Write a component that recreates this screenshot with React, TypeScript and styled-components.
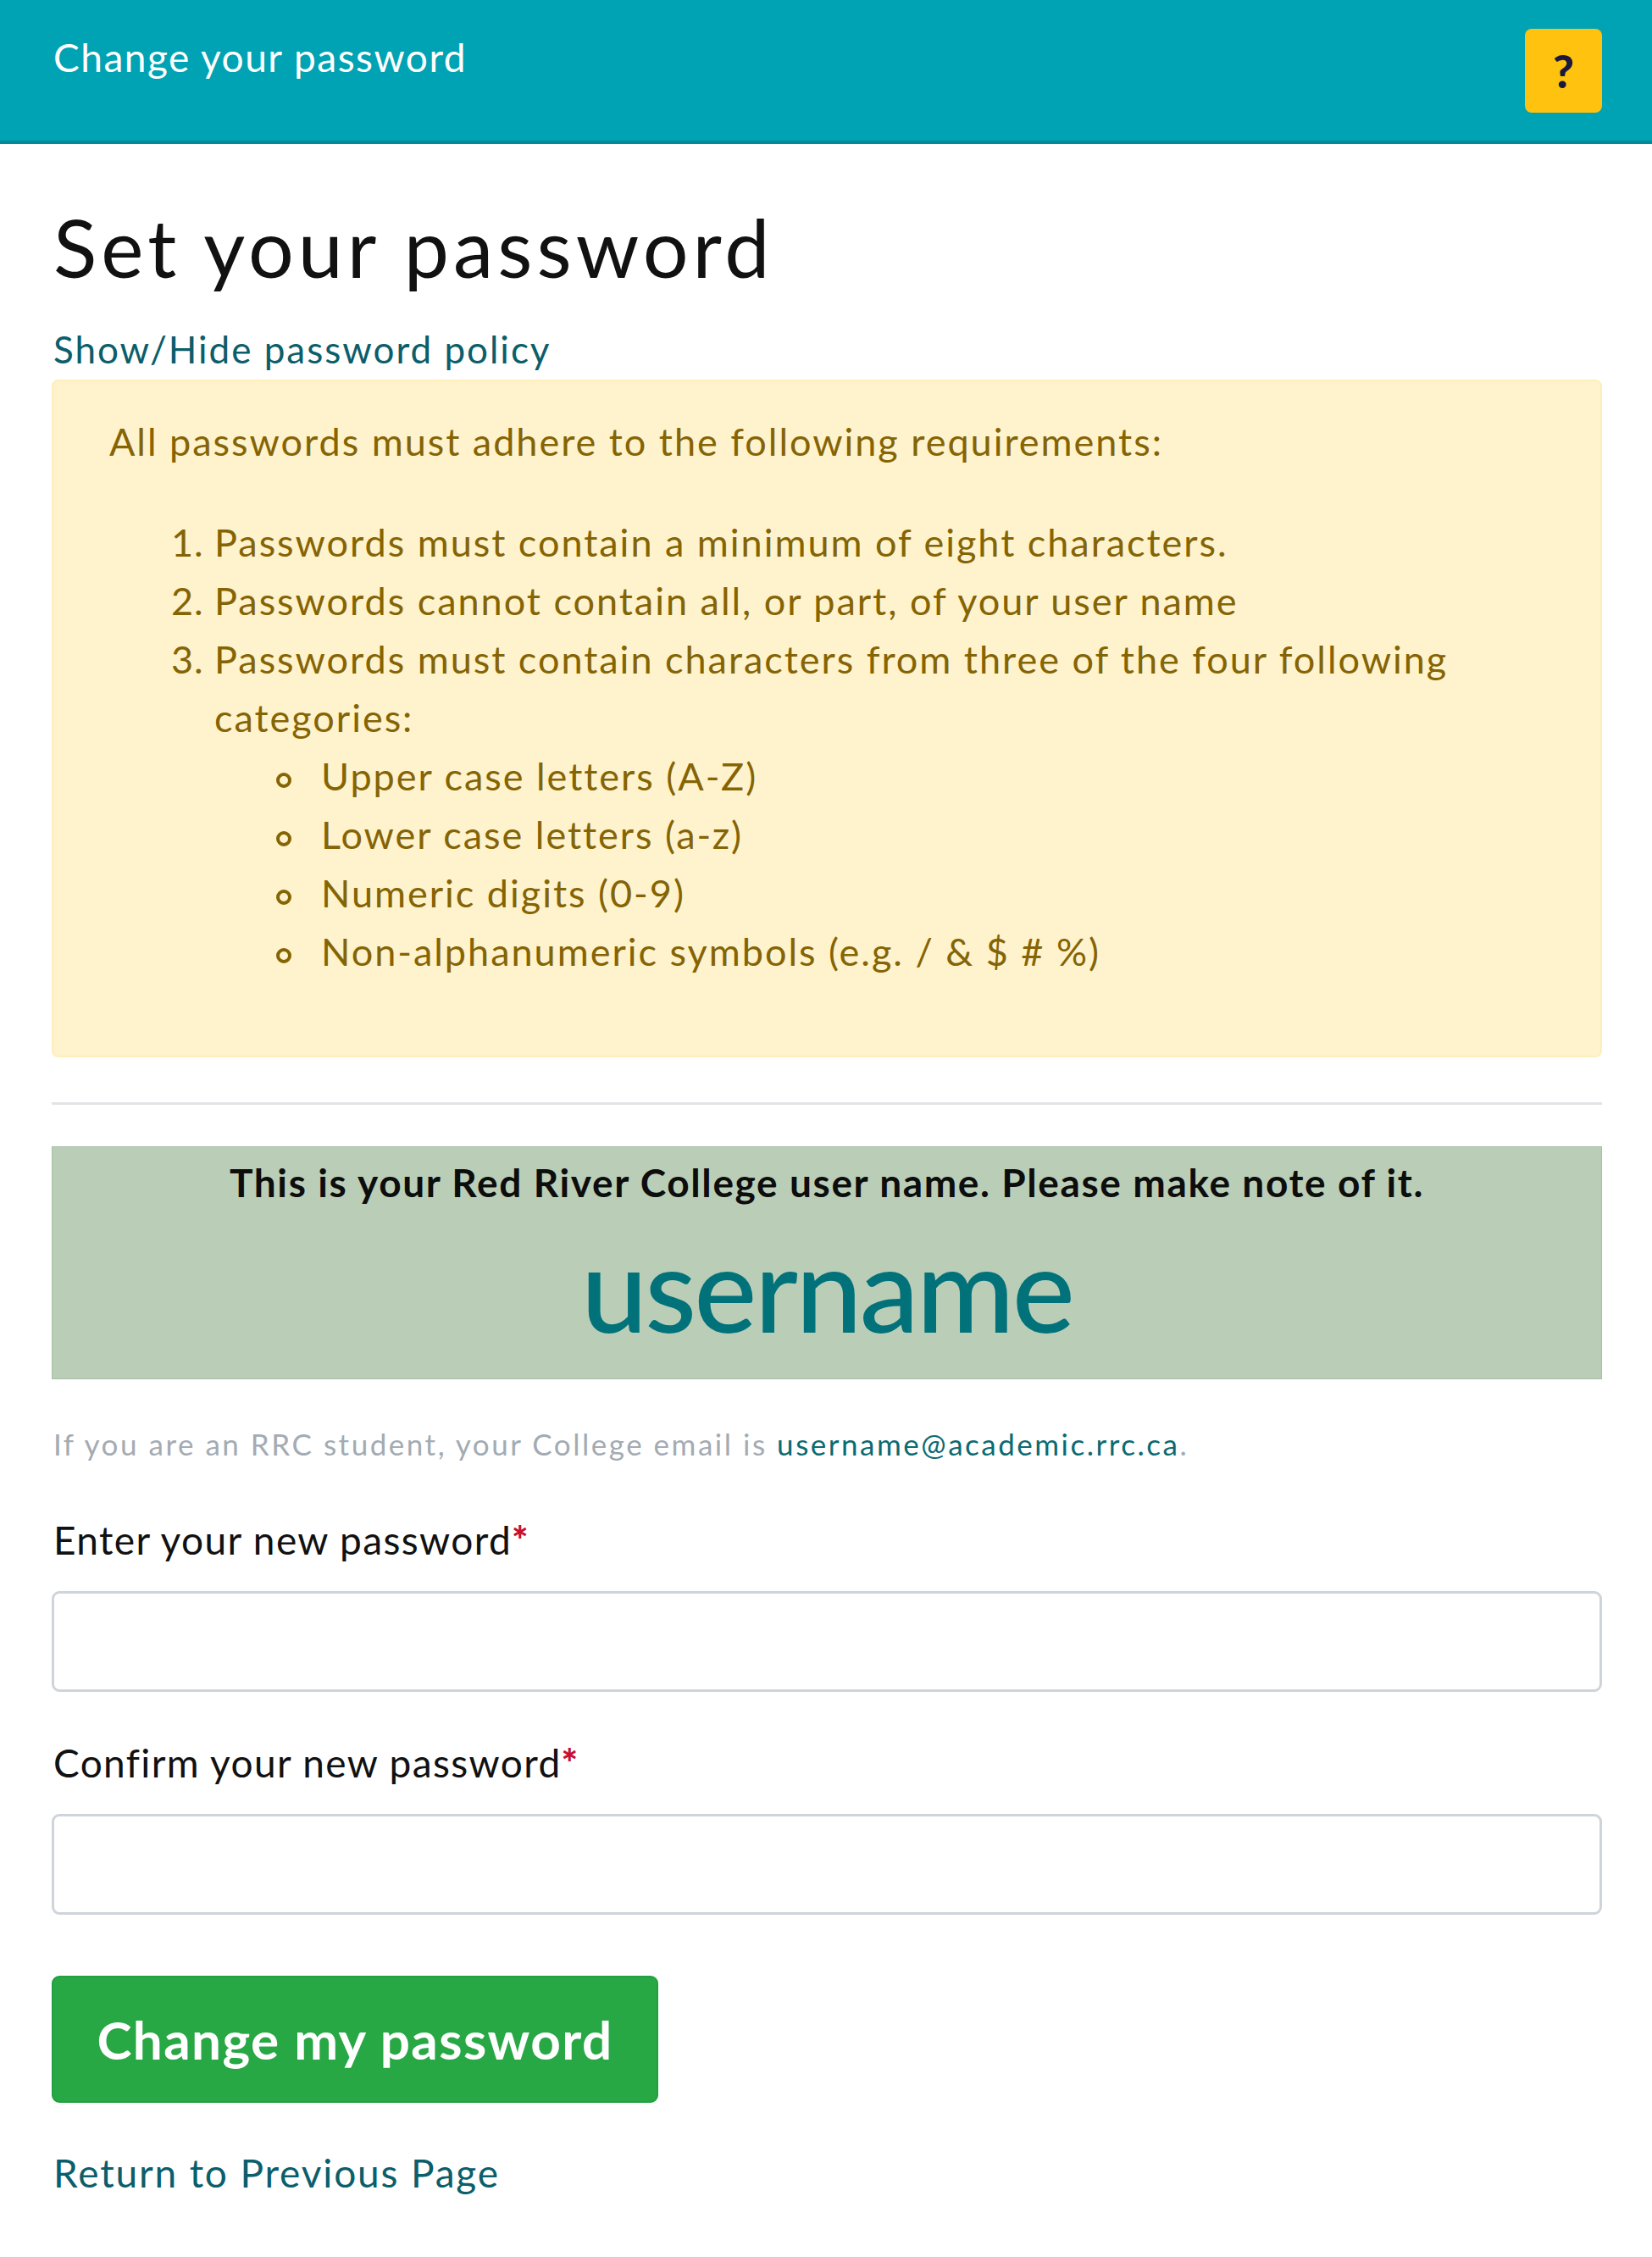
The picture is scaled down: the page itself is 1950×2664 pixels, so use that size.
import styled, { createGlobalStyle } from "styled-components";

const GlobalStyle = createGlobalStyle`
  body {
    margin: 0;
    background: #ffffff;
    font-family: Lato, "Open Sans", "Liberation Sans", sans-serif;
    color: #111111;
  }
`;

const Header = styled.header`
  display: flex;
  justify-content: space-between;
  align-items: flex-start;
  height: 166px;
  padding: 0 59px 0 63px;
  background: #00a3b4;
  border-bottom: 4px solid #00899a;
`;

const HeaderTitle = styled.div`
  margin-top: 40px;
  color: #ffffff;
  font-size: 46px;
  line-height: 55px;
  letter-spacing: 0.033em;
`;

const HelpButton = styled.button`
  margin-top: 34px;
  width: 91px;
  height: 99px;
  border: none;
  border-radius: 8px;
  background: #ffc20e;
  color: #1b1a3c;
  font-family: inherit;
  font-size: 54px;
  font-weight: 900;
  line-height: 1;
  padding: 0;
`;

const Main = styled.main`
  display: flex;
  flex-direction: column;
  align-items: stretch;
  padding: 0 59px 40px 61px;
`;

const Heading = styled.h1`
  margin: 64px 0 0 2px;
  font-size: 95px;
  line-height: 114px;
  font-weight: 400;
  letter-spacing: 0.053em;
  color: #111111;
`;

const TextLink = styled.a`
  display: block;
  margin: 31px 0 0 2px;
  color: #0b5e6b;
  text-decoration: none;
  font-size: 44px;
  line-height: 66px;
  letter-spacing: 0.045em;
`;

const PolicyBox = styled.div`
  margin-top: 3px;
  padding: 37px 40px 88px 66px;
  background: #fff3cd;
  border: 2px solid #ffeeba;
  border-radius: 8px;
  color: #856404;
  font-size: 45px;
  line-height: 69px;
  letter-spacing: 0.044em;
`;

const PolicyIntro = styled.p`
  margin: 0 0 50px;
`;

const Numbered = styled.ol`
  margin: 0;
  padding-left: 124px;

  & > li::marker {
    letter-spacing: 0.02em;
  }
`;

const Bullets = styled.ul`
  margin: 0;
  padding-left: 126px;
  list-style: none;
`;

const Bullet = styled.li`
  &::before {
    content: "";
    display: inline-block;
    box-sizing: border-box;
    width: 18px;
    height: 18px;
    margin: 0 35px 0 -53px;
    border: 4px solid #856404;
    border-radius: 50%;
    vertical-align: 3px;
  }
`;

const Rule = styled.hr`
  margin: 53px 0 0;
  border: none;
  border-top: 3px solid #e1e3e6;
`;

const UserBox = styled.div`
  display: flex;
  flex-direction: column;
  align-items: center;
  margin-top: 49px;
  height: 275px;
  box-sizing: border-box;
  padding-top: 7px;
  background: #baceb7;
  border: 1px solid #a9bfa6;
`;

const UserNote = styled.div`
  font-size: 46px;
  line-height: 69px;
  font-weight: 700;
  letter-spacing: 0.035em;
  color: #0d0d0d;
`;

const UserName = styled.div`
  margin-top: 5px;
  font-size: 140px;
  line-height: 168px;
  font-weight: 500;
  letter-spacing: -0.02em;
  color: #02727a;
`;

const EmailNote = styled.p`
  margin: 50px 0 0 2px;
  font-size: 35px;
  line-height: 52px;
  letter-spacing: 0.072em;
  color: #a3abb3;
`;

const EmailLink = styled.a`
  color: #0b6a72;
  text-decoration: none;
`;

const Label = styled.label<{ $gap: number }>`
  display: block;
  margin: ${(p) => p.$gap}px 0 0 2px;
  font-size: 46px;
  line-height: 69px;
  letter-spacing: 0.03em;
  color: #111111;
`;

const Required = styled.span`
  color: #c8102e;
  font-weight: 900;
  letter-spacing: 0;
`;

const Field = styled.input`
  display: block;
  box-sizing: border-box;
  width: 100%;
  height: 119px;
  margin-top: 26px;
  border: 3px solid #cfd4da;
  border-radius: 9px;
  background: #ffffff;
  font-size: 44px;
`;

const SubmitButton = styled.button`
  display: flex;
  align-items: center;
  justify-content: center;
  align-self: flex-start;
  margin-top: 72px;
  width: 716px;
  height: 150px;
  border: 2px solid #22a03f;
  border-radius: 9px;
  background: #28a745;
  color: #ffffff;
  font-family: inherit;
  font-size: 62px;
  font-weight: 700;
  letter-spacing: 0.023em;
`;

const ReturnLink = styled(TextLink)`
  margin-top: 48px;
  font-size: 46px;
  line-height: 69px;
  letter-spacing: 0.04em;
`;

const categories = [
  "Upper case letters (A-Z)",
  "Lower case letters (a-z)",
  "Numeric digits (0-9)",
  "Non-alphanumeric symbols (e.g. / & $ # %)",
];

export default function App() {
  return (
    <>
      <GlobalStyle />
      <Header>
        <HeaderTitle>Change your password</HeaderTitle>
        <HelpButton aria-label="Help">?</HelpButton>
      </Header>
      <Main>
        <Heading>Set your password</Heading>
        <TextLink href="#">Show/Hide password policy</TextLink>
        <PolicyBox>
          <PolicyIntro>All passwords must adhere to the following requirements:</PolicyIntro>
          <Numbered>
            <li>Passwords must contain a minimum of eight characters.</li>
            <li>Passwords cannot contain all, or part, of your user name</li>
            <li>
              Passwords must contain characters from three of the four following categories:
              <Bullets>
                {categories.map((c) => (
                  <Bullet key={c}>{c}</Bullet>
                ))}
              </Bullets>
            </li>
          </Numbered>
        </PolicyBox>
        <Rule />
        <UserBox>
          <UserNote>This is your Red River College user name. Please make note of it.</UserNote>
          <UserName>username</UserName>
        </UserBox>
        <EmailNote>
          If you are an RRC student, your College email is{" "}
          <EmailLink href="#">username@academic.rrc.ca</EmailLink>.
        </EmailNote>
        <Label $gap={53}>
          Enter your new password<Required>*</Required>
        </Label>
        <Field type="password" />
        <Label $gap={49}>
          Confirm your new password<Required>*</Required>
        </Label>
        <Field type="password" />
        <SubmitButton>Change my password</SubmitButton>
        <ReturnLink href="#">Return to Previous Page</ReturnLink>
      </Main>
    </>
  );
}
